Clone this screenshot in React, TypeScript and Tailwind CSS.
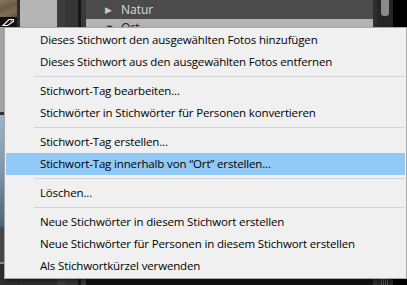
import React from 'react';

type Entry = { label: string; active?: boolean } | 'sep';

const entries: Entry[] = [
  { label: 'Dieses Stichwort den ausgewählten Fotos hinzufügen' },
  { label: 'Dieses Stichwort aus den ausgewählten Fotos entfernen' },
  'sep',
  { label: 'Stichwort-Tag bearbeiten...' },
  { label: 'Stichwörter in Stichwörter für Personen konvertieren' },
  'sep',
  { label: 'Stichwort-Tag erstellen...' },
  { label: 'Stichwort-Tag innerhalb von “Ort” erstellen...', active: true },
  'sep',
  { label: 'Löschen...' },
  'sep',
  { label: 'Neue Stichwörter in diesem Stichwort erstellen' },
  { label: 'Neue Stichwörter für Personen in diesem Stichwort erstellen' },
  { label: 'Als Stichwortkürzel verwenden' },
];

const TagIcon: React.FC = () => (
  <svg width="15" height="10" viewBox="0 0 15 10" className="block">
    <rect width="15" height="10" fill="#111" />
    <path d="M2 8.5 L8 2.5 L12.5 2.5 L12.5 4.5 L6.5 8.5 Z" fill="none" stroke="#f2f2f2" strokeWidth="1.2" />
    <path d="M9.5 4.5 L11 3.5" stroke="#f2f2f2" strokeWidth="1" />
  </svg>
);

const ContextMenu: React.FC = () => (
  <div
    className="absolute left-[4px] top-[27px] w-[403px] h-[252px] bg-[#f0f0f0] border border-[#a8a8a8] pl-[1px] pr-[1px] pt-[1px] text-[11.5px] text-black shadow-[2px_2px_3px_rgba(0,0,0,0.45)]"
    style={{ fontFamily: '"Open Sans", "Noto Sans", "Liberation Sans", sans-serif' }}
  >
    {entries.map((e, i) =>
      e === 'sep' ? (
        <div key={i} className="h-[7px] flex items-center pl-[28px]">
          <div className="h-px w-full bg-[#d4d4d4]" />
        </div>
      ) : (
        <div
          key={i}
          className={`h-[22px] flex items-center pl-[34px] whitespace-nowrap tracking-[-0.15px] ${e.active ? 'bg-[#91c9f7]' : ''}`}
        >
          {e.label}
        </div>
      )
    )}
  </div>
);

export default function App() {
  return (
    <div className="relative w-[407px] h-[285px] overflow-hidden bg-[#2a2a2a]">
      <div className="flex h-full">
        {/* thumbnail strip */}
        <div className="w-[17px] flex flex-col">
          <div className="h-[17px] bg-[linear-gradient(160deg,#8a7a62,#6a5b48_40%,#7d6e58_70%,#5e5140)]" />
          <div className="h-[10px] pl-[1px] bg-[#111]">
            <TagIcon />
          </div>
          <div className="h-[85px] bg-[#a3a3a3]" />
          <div className="h-[3px] bg-[#333]" />
          <div className="h-[112px] bg-[linear-gradient(180deg,#9fb4c8,#7f97ab_50%,#4d6373)]" />
          <div className="h-[35px] bg-[#474747]" />
          <div className="h-[2px] bg-[#8a8a8a]" />
          <div className="flex-1 bg-[#2e2e2e]" />
        </div>
        <div className="w-[3px] bg-[#2c2c2c]" />
        <div className="w-[37px] flex flex-col">
          <div className="h-[27px] bg-[#b5b5b5]" />
          <div className="flex-1 bg-[#2e2e2e]" />
        </div>
        <div className="w-[8px] bg-[#3c3c3c]" />
        <div className="w-[13px] bg-[#363636]" />
        <div className="w-[3px] bg-[#161616]" />
        <div className="w-[5px] bg-[#3a3a3a]" />
        {/* keyword list panel */}
        <div className="w-[287px] flex flex-col text-[12px]" style={{ fontFamily: '"Open Sans", "Noto Sans", sans-serif' }}>
          <div className="h-[19px] bg-[#4b4b4b] flex items-center pl-[19px] text-[#dcdcdc]">
            <span className="text-[9px] text-[#c8c8c8] w-[16px]">▶</span>
            <span>Natur</span>
          </div>
          <div className="h-[8px] bg-[#b3b3b3] flex items-start pl-[19px] pt-[4px] overflow-hidden text-[#222] leading-[10px]">
            <span className="text-[9px] w-[16px]">▼</span>
            <span>Ort</span>
          </div>
          <div className="flex-1 bg-[#121212]" />
        </div>
        <div className="w-[4px] bg-[#2f2f2f]" />
        <div className="w-[16px] flex flex-col bg-[#262626] px-[4px]">
          <div className="h-[16px] bg-[#8a8a8a] rounded-b-[3px]" />
          <div className="flex-1" />
          <div className="h-[6px] bg-[repeating-linear-gradient(90deg,#555_0px,#555_1px,#1a1a1a_1px,#1a1a1a_2px)]" />
        </div>
        <div className="flex-1 bg-black" />
      </div>
      <ContextMenu />
    </div>
  );
}
